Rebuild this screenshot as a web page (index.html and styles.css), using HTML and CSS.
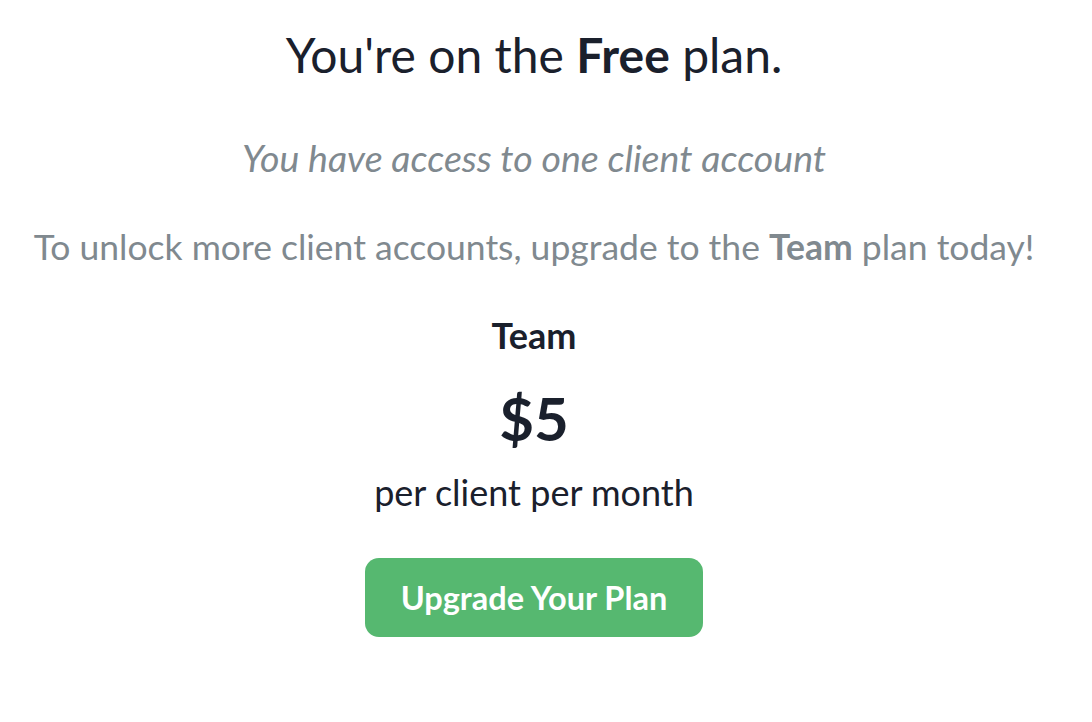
FILE: index.html
```html
<!DOCTYPE html>
<html>
<head>
<meta charset="utf-8">
<link rel="stylesheet" href="styles.css">
</head>
<body>
<main class="plan">
  <h1 class="title">You're on the <strong>Free</strong> plan.</h1>
  <p class="access">You have access to one client account</p>
  <p class="unlock">To unlock more client accounts, upgrade to the <strong>Team</strong> plan today!</p>
  <div class="tier">
    <h2 class="tier-name">Team</h2>
    <div class="price">$5</div>
    <div class="per">per client per month</div>
  </div>
  <button class="upgrade">Upgrade Your Plan</button>
</main>
</body>
</html>
```

FILE: styles.css
```css
* { box-sizing: border-box; }
html, body { margin: 0; padding: 0; background: #fff; }
body {
  font-family: Lato, "Noto Sans", sans-serif;
  color: #1a202c;
  width: 1068px;
  height: 722px;
}
.plan {
  display: flex;
  flex-direction: column;
  align-items: center;
  padding-top: 27px;
}
.title {
  margin: 0;
  font-size: 48px;
  font-weight: 400;
  line-height: 56px;
}
.title strong { font-weight: 700; }
.access {
  margin: 53px 0 0;
  font-style: italic;
  font-size: 37.5px;
  line-height: 44px;
  color: #80898f;
}
.unlock {
  margin: 45px 0 0;
  font-size: 35.5px;
  line-height: 44px;
  color: #80898f;
}
.unlock strong { font-weight: 700; }
.tier {
  display: flex;
  flex-direction: column;
  align-items: center;
  margin-top: 44px;
}
.tier-name {
  margin: 0;
  font-size: 36px;
  font-weight: 700;
  line-height: 44px;
}
.price {
  margin-top: 26px;
  font-size: 60px;
  font-weight: 700;
  line-height: 70px;
}
.per {
  margin-top: 17px;
  font-size: 36px;
  line-height: 44px;
}
.upgrade {
  margin-top: 44px;
  width: 338px;
  height: 79px;
  border: none;
  border-radius: 14px;
  background: #56b870;
  color: #fff;
  font-family: Lato, "Noto Sans", sans-serif;
  font-size: 32.5px;
  font-weight: 700;
}
```
